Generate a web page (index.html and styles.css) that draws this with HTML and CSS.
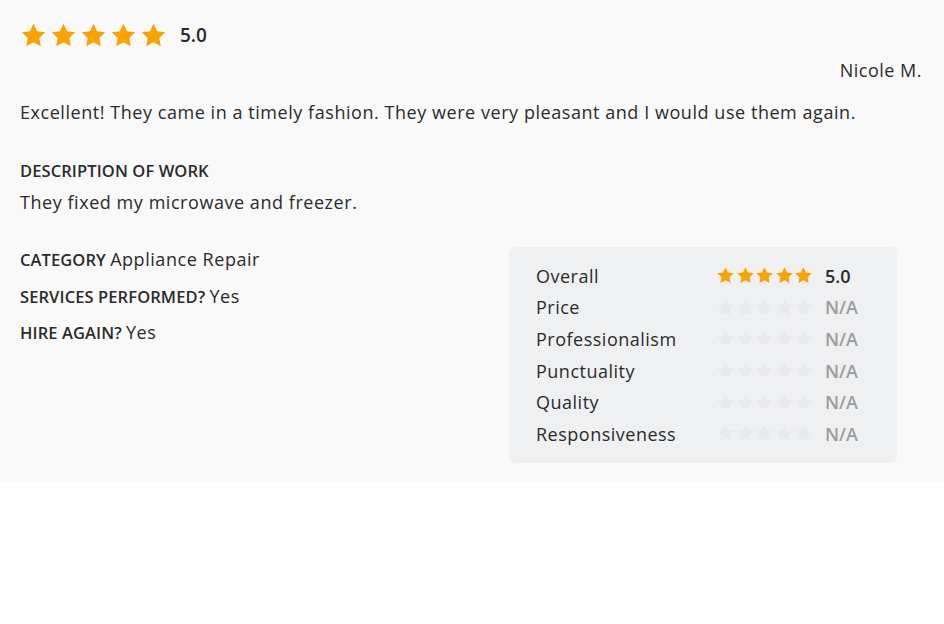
FILE: index.html
```html
<!DOCTYPE html>
<html lang="en">
<head>
<meta charset="utf-8">
<title>Review</title>
<link rel="stylesheet" href="styles.css">
</head>
<body>
<svg width="0" height="0" class="defs" aria-hidden="true">
  <defs>
    <symbol id="star" viewBox="0 0 24 24">
      <path d="M12 1.6l3.2 6.6 7.2 1-5.2 5.1 1.25 7.2L12 18.1l-6.45 3.4 1.25-7.2-5.2-5.1 7.2-1z"/>
    </symbol>
  </defs>
</svg>
<div class="review">
  <div class="top-rating">
    <span class="stars big">
      <svg><use href="#star"/></svg><svg><use href="#star"/></svg><svg><use href="#star"/></svg><svg><use href="#star"/></svg><svg><use href="#star"/></svg>
    </span>
    <span class="score">5.0</span>
  </div>
  <div class="author">Nicole M.</div>
  <p class="comment">Excellent! They came in a timely fashion. They were very pleasant and I would use them again.</p>
  <div class="label block">DESCRIPTION OF WORK</div>
  <p class="desc">They fixed my microwave and freezer.</p>
  <div class="bottom">
    <div class="facts">
      <div class="fact"><span class="label">CATEGORY</span> <span class="val">Appliance Repair</span></div>
      <div class="fact"><span class="label">SERVICES PERFORMED?</span> <span class="val">Yes</span></div>
      <div class="fact"><span class="label">HIRE AGAIN?</span> <span class="val">Yes</span></div>
    </div>
    <div class="ratings">
      <div class="row"><span class="name">Overall</span><span class="stars small on"><svg><use href="#star"/></svg><svg><use href="#star"/></svg><svg><use href="#star"/></svg><svg><use href="#star"/></svg><svg><use href="#star"/></svg></span><span class="num">5.0</span></div>
      <div class="row"><span class="name">Price</span><span class="stars small off"><svg><use href="#star"/></svg><svg><use href="#star"/></svg><svg><use href="#star"/></svg><svg><use href="#star"/></svg><svg><use href="#star"/></svg></span><span class="num na">N/A</span></div>
      <div class="row"><span class="name">Professionalism</span><span class="stars small off"><svg><use href="#star"/></svg><svg><use href="#star"/></svg><svg><use href="#star"/></svg><svg><use href="#star"/></svg><svg><use href="#star"/></svg></span><span class="num na">N/A</span></div>
      <div class="row"><span class="name">Punctuality</span><span class="stars small off"><svg><use href="#star"/></svg><svg><use href="#star"/></svg><svg><use href="#star"/></svg><svg><use href="#star"/></svg><svg><use href="#star"/></svg></span><span class="num na">N/A</span></div>
      <div class="row"><span class="name">Quality</span><span class="stars small off"><svg><use href="#star"/></svg><svg><use href="#star"/></svg><svg><use href="#star"/></svg><svg><use href="#star"/></svg><svg><use href="#star"/></svg></span><span class="num na">N/A</span></div>
      <div class="row"><span class="name">Responsiveness</span><span class="stars small off"><svg><use href="#star"/></svg><svg><use href="#star"/></svg><svg><use href="#star"/></svg><svg><use href="#star"/></svg><svg><use href="#star"/></svg></span><span class="num na">N/A</span></div>
    </div>
  </div>
</div>
</body>
</html>
```
FILE: styles.css
```css
html, body {
  margin: 0;
  padding: 0;
  background: #ffffff;
}
body {
  font-family: "Open Sans", "Noto Sans", "Liberation Sans", sans-serif;
  color: #2b2b2b;
}
.defs {
  position: absolute;
  width: 0;
  height: 0;
}
.review {
  background: #f9f9fa;
  padding: 20px 22px 19px 20px;
  display: flex;
  flex-direction: column;
}
.top-rating {
  display: flex;
  align-items: center;
  height: 30px;
}
.stars {
  display: flex;
}
.stars svg {
  display: block;
}
.stars.big {
  gap: 3px;
  fill: #f9a300;
}
.stars.big svg {
  width: 27px;
  height: 27px;
}
.score {
  margin-left: 13px;
  font-size: 19px;
  font-weight: 600;
  color: #2b2b2b;
}
.author {
  text-align: right;
  font-size: 18px;
  letter-spacing: 0.5px;
  margin-top: 7px;
  line-height: 26px;
}
.comment {
  margin: 16px 0 0;
  font-size: 18px;
  letter-spacing: 0.55px;
  line-height: 26px;
}
.label {
  font-weight: 600;
  font-size: 16.5px;
  letter-spacing: 0.1px;
  color: #2b2b2b;
}
.label.block {
  margin-top: 35px;
  line-height: 22px;
}
.desc {
  margin: 7px 0 0;
  font-size: 18px;
  letter-spacing: 0.55px;
  line-height: 26px;
}
.bottom {
  display: flex;
  align-items: flex-start;
  margin-top: 32px;
  padding-right: 25px;
}
.facts {
  flex: 1;
  display: flex;
  flex-direction: column;
  gap: 10.5px;
  margin-top: -1px;
}
.fact {
  line-height: 26px;
}
.val {
  font-size: 18px;
  letter-spacing: 0.55px;
}
.ratings {
  width: 388px;
  box-sizing: border-box;
  background: #eff0f2;
  border-radius: 6px;
  padding: 13px 27px 13px 27px;
}
.row {
  display: flex;
  align-items: center;
  height: 31.6px;
}
.name {
  width: 180px;
  font-size: 18px;
  letter-spacing: 0.5px;
}
.stars.small {
  gap: 0.5px;
}
.stars.small svg {
  width: 19px;
  height: 19px;
}
.stars.on {
  fill: #f9a300;
}
.stars.off {
  fill: #e8e9eb;
}
.num {
  margin-left: 12px;
  font-size: 18px;
  font-weight: 600;
  color: #2b2b2b;
}
.num.na {
  color: #9c9c9e;
}
.facts {
  gap: 9.5px;
}
```
